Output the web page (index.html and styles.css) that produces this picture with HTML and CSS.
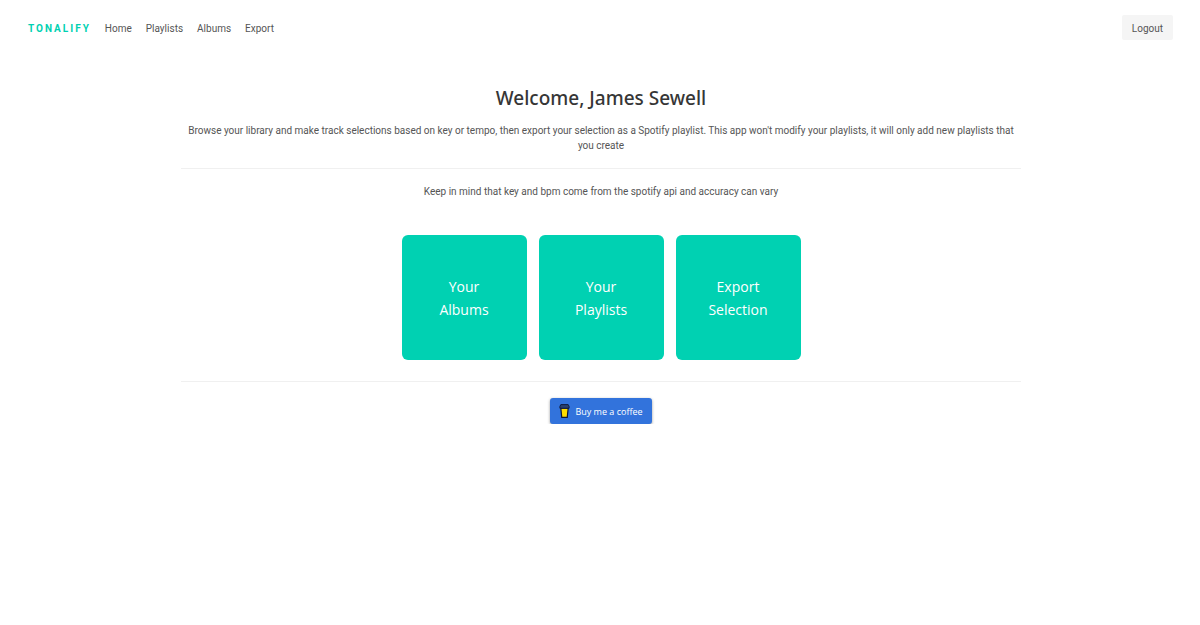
FILE: index.html
```html
<!DOCTYPE html>
<html lang="en">
<head>
<meta charset="utf-8">
<meta name="viewport" content="width=device-width, initial-scale=1">
<title>Tonalify</title>
<link rel="stylesheet" href="styles.css">
</head>
<body>
<nav class="navbar" aria-label="Main">
  <a class="brand" href="#">TONALIFY</a>
  <a class="nav-link" href="#">Home</a>
  <a class="nav-link" href="#">Playlists</a>
  <a class="nav-link" href="#">Albums</a>
  <a class="nav-link" href="#">Export</a>
  <button class="logout" type="button">Logout</button>
</nav>
<main class="container">
  <h1 class="title">Welcome, James Sewell</h1>
  <p class="intro">Browse your library and make track selections based on key or tempo, then export your selection as a Spotify playlist. This app won't modify your playlists, it will only add new playlists that you create</p>
  <hr class="rule">
  <p class="note">Keep in mind that key and bpm come from the spotify api and accuracy can vary</p>
  <div class="tiles">
    <a class="tile" href="#">Your<br>Albums</a>
    <a class="tile" href="#">Your<br>Playlists</a>
    <a class="tile" href="#">Export<br>Selection</a>
  </div>
  <hr class="rule">
  <a class="coffee" href="#">
    <svg class="cup" viewBox="0 0 12 16" aria-hidden="true">
      <path d="M2 5h8L9 15H3z" fill="#fd0" stroke="#0d1737" stroke-width="1.3"/>
      <path d="M1 3 2 1h8l1 2v2H1z" fill="#29406f" stroke="#0d1737"/>
    </svg>
    <span>Buy me a coffee</span>
  </a>
</main>
</body>
</html>
```
FILE: styles.css
```css
* { box-sizing: border-box; }
body {
  margin: 0;
  background: #fff;
  color: #555;
  font: 10px/15px Roboto, "Open Sans", sans-serif;
}
a { color: inherit; text-decoration: none; }
.navbar {
  display: flex;
  align-items: baseline;
  gap: 14px;
  padding: 15px 27px 15px 28px;
}
.brand {
  color: #00d1b2;
  font-weight: 700;
  letter-spacing: 2px;
}
.logout {
  margin-left: auto;
  padding: 6px 10px 4px;
  border: 0;
  border-radius: 2px;
  background: #f5f5f5;
  color: inherit;
  font: inherit;
}
.container {
  max-width: 842px;
  margin: 0 auto;
  padding: 30px 0 0 2px;
  text-align: center;
}
.title {
  margin: 0 0 12px;
  color: #363636;
  font: 500 19px/26px "Noto Sans", "Open Sans", sans-serif;
}
.intro, .note { margin: 0; }
.rule {
  height: 1px;
  margin: 15px 0;
  border: 0;
  background: #f0f0f0;
}
.tiles {
  display: flex;
  justify-content: center;
  gap: 12px;
  margin: 36px 0 21px;
}
.tile {
  display: flex;
  align-items: center;
  justify-content: center;
  width: 125px;
  height: 125px;
  padding-top: 1px;
  border-radius: 6px;
  background: #00d1b2;
  color: #fff;
  font: 14px/23px "Open Sans", "Noto Sans", sans-serif;
}
.coffee {
  display: inline-flex;
  align-items: center;
  gap: 5px;
  margin-top: 1px;
  padding: 5px 9px;
  border-radius: 3px;
  background: #3273dc;
  color: #fff;
  font: 9px/15px "Open Sans", "Noto Sans", sans-serif;
  box-shadow: 0 1px 3px #0006;
}
.cup { width: 11px; height: 16px; }
```
